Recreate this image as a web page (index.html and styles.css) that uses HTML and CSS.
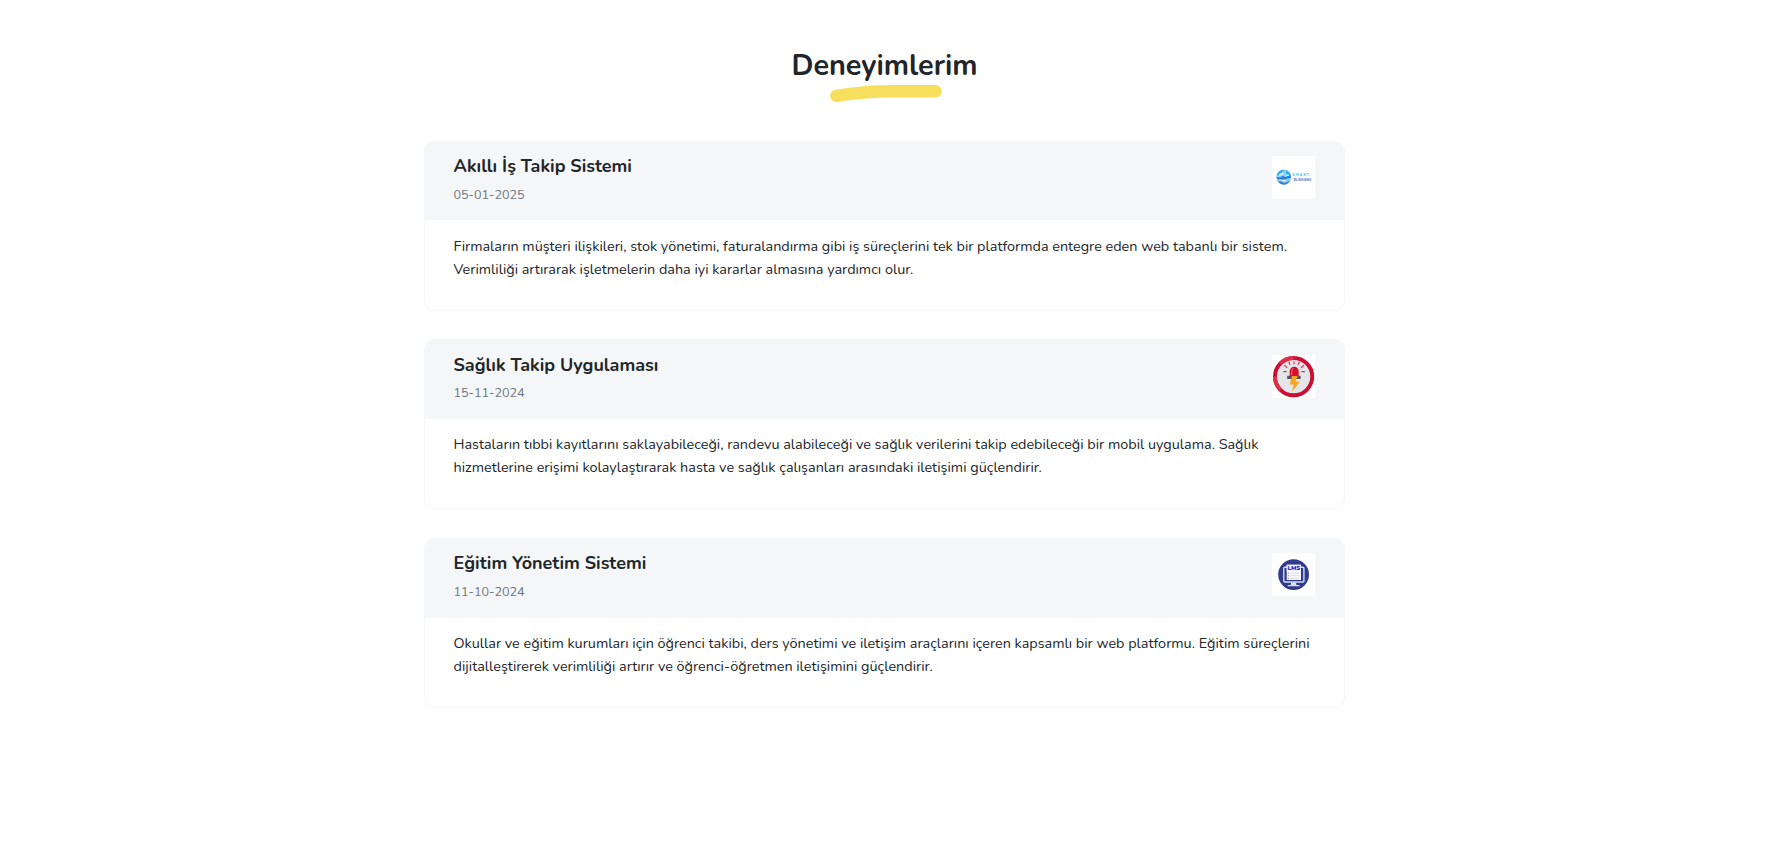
FILE: index.html
```
<!DOCTYPE html>
<html lang="tr">
<head>
<meta charset="utf-8">
<title>Deneyimlerim</title>
<link rel="stylesheet" href="styles.css">
</head>
<body>
<section class="experience">
  <h2 class="heading">Deneyimlerim
    <svg class="stroke" viewBox="0 0 112 17" aria-hidden="true"><path d="M6.3 10.800Q34 6.200 62 6.200L105.600 6.300" fill="none" stroke="#f7df5e" stroke-width="12.400" stroke-linecap="round"/></svg>
  </h2>
  <div class="list">
    <article class="card">
      <header class="card-header">
        <div>
          <h3 class="card-title">Akıllı İş Takip Sistemi</h3>
          <p class="card-date">05-01-2025</p>
        </div>
        <svg class="logo" viewBox="0 0 44 44" aria-hidden="true">
          <rect width="44" height="44" fill="#fff"/>
          <circle cx="12" cy="21.500" r="7.700" fill="#8fd4f6"/>
          <path d="M5 19q2-5 8-5l-3 3-4.500 3.500zM14 14.500q4.500 1 5.500 6l-5-2z" fill="#2fb0ee"/>
          <path d="M4.500 21.500l4 .5 2-2 3 1.500 5-2 1 3-4 .5-3 2-3-1.500-4 .5z" fill="#2480dd"/>
          <path d="M6 25.500l4 .5 3 1.500 5.500-2.500q-2 4-6.500 4.200Q8 29 6 25.500z" fill="#3f7fd0"/>
          <path d="M7.500 19.500l4-2M10 25.200l3.500-.5M14.500 20l2.500-.5" stroke="#fff" stroke-width="1.300"/>
          <text x="21" y="20.600" class="smart" textLength="16.500">SMART</text>
          <text x="22" y="25.200" class="business" textLength="18">BUSINESS</text>
        </svg>
      </header>
      <div class="card-body"><p class="card-text">Firmaların müşteri ilişkileri, stok yönetimi, faturalandırma gibi iş süreçlerini tek bir platformda entegre eden web tabanlı bir sistem. Verimliliği artırarak işletmelerin daha iyi kararlar almasına yardımcı olur.</p></div>
    </article>
    <article class="card">
      <header class="card-header">
        <div>
          <h3 class="card-title">Sağlık Takip Uygulaması</h3>
          <p class="card-date">15-11-2024</p>
        </div>
        <svg class="logo" viewBox="0 0 44 44" aria-hidden="true">
          <rect width="44" height="44" fill="#fff"/>
          <circle cx="22" cy="22" r="19" fill="#e4e6e9" stroke="#cf0d32" stroke-width="4"/>
          <path d="M8.500 8.500A19 19 0 0 1 22 3M8.500 35.500A19 19 0 0 1 3 22" fill="none" stroke="#e02f4d" stroke-width="4"/>
          <path d="M22.500 9.500v-3M18.500 10L17 7M26.500 10L28 7M15.500 13l-3-2.500M29.500 13l3-2.500M15 17h-3.500M30 17h3.500" stroke="#dc3550" stroke-width="1.200"/>
          <path d="M18 21.500V16.500a4.600 4.600 0 0 1 9.200 0v5z" fill="#d5122f"/>
          <path d="M20 20.500v-4q0-2 2-3" fill="none" stroke="#f2566d" stroke-width="1.200"/>
          <path d="M15.500 21.200h13.700v3.300H15.500z" fill="#59545e"/>
          <path d="M20.500 21.500H26L24 27h4.500L20.500 37.500l1.500-7.500h-4z" fill="#fba61c"/>
        </svg>
      </header>
      <div class="card-body"><p class="card-text">Hastaların tıbbi kayıtlarını saklayabileceği, randevu alabileceği ve sağlık verilerini takip edebileceği bir mobil uygulama. Sağlık hizmetlerine erişimi kolaylaştırarak hasta ve sağlık çalışanları arasındaki iletişimi güçlendirir.</p></div>
    </article>
    <article class="card">
      <header class="card-header">
        <div>
          <h3 class="card-title">Eğitim Yönetim Sistemi</h3>
          <p class="card-date">11-10-2024</p>
        </div>
        <svg class="logo" viewBox="0 0 44 44" aria-hidden="true">
          <rect width="44" height="44" fill="#fff"/>
          <circle cx="22" cy="22" r="15.700" fill="#303b8c"/>
          <rect x="12" y="14.500" width="20.500" height="15" rx="1" fill="#303b8c" stroke="#d5dff5" stroke-width="1.400"/>
          <path d="M15 12h14.500v15.500H15z" fill="#fff"/>
          <path d="M19.500 30h5l.5 2.500h3v1.500H16v-1.500h3z" fill="#d5dff5"/>
          <path d="M18.500 20.500H28M18.500 23.200H28M18.500 25.800H28" stroke="#c9cff0" stroke-width=".8"/>
          <path d="M16 20.500h1.200M16 23.200h1.200M16 25.800h1.200" stroke="#7655d8"/>
          <rect x="15" y="12" width="14.500" height="6" fill="#eeefff"/>
          <text x="15.700" y="17.300" class="lms" textLength="13.200" lengthAdjust="spacingAndGlyphs">LMS</text>
        </svg>
      </header>
      <div class="card-body"><p class="card-text">Okullar ve eğitim kurumları için öğrenci takibi, ders yönetimi ve iletişim araçlarını içeren kapsamlı bir web platformu. Eğitim süreçlerini dijitalleştirerek verimliliği artırır ve öğrenci-öğretmen iletişimini güçlendirir.</p></div>
    </article>
  </div>
</section>
</body>
</html>
```
FILE: styles.css
```
html { font-size: 14.4px; }
* { box-sizing: border-box; }
body {
  margin: 0;
  background: #fff;
  color: #212529;
  font-family: Nunito, Lato, sans-serif;
  font-size: 1rem;
  line-height: 1.6;
}
.experience {
  display: flex;
  flex-direction: column;
  align-items: center;
  padding: 49px 15px 0 0;
}
.heading {
  position: relative;
  margin: 0 0 57px;
  font-size: 2rem;
  font-weight: 700;
  line-height: 1.2;
}
.stroke {
  position: absolute;
  left: 38.700px;
  top: 36px;
  width: 112px;
  height: 17px;
}
.list {
  display: flex;
  flex-direction: column;
  gap: 2rem;
  width: 921.600px;
}
.card {
  border: 1px solid #f4f6f8;
  border-radius: 10px;
  overflow: hidden;
}
.card-header {
  display: flex;
  justify-content: space-between;
  align-items: flex-start;
  padding: 1rem 2rem;
  background: #f4f6f8;
  border-bottom: 1px solid #f4f6f8;
}
.card-title {
  margin: 0 0 .5rem;
  font-size: 1.25rem;
  font-weight: 700;
  line-height: 1.2;
}
.card-date {
  margin: 0;
  color: #6c757d;
  font-size: .875rem;
}
.logo { width: 3rem; height: 3rem; }
.smart { font: 800 3.400px Nunito, sans-serif; fill: #45bff0; }
.business { font: 700 3.900px Nunito, sans-serif; fill: #6679b8; }
.lms { font: 900 6.400px Nunito, sans-serif; fill: #381dd0; }
.card-body { padding: 1rem 2rem; }
.card-text { margin: 0 0 1rem; }
```
